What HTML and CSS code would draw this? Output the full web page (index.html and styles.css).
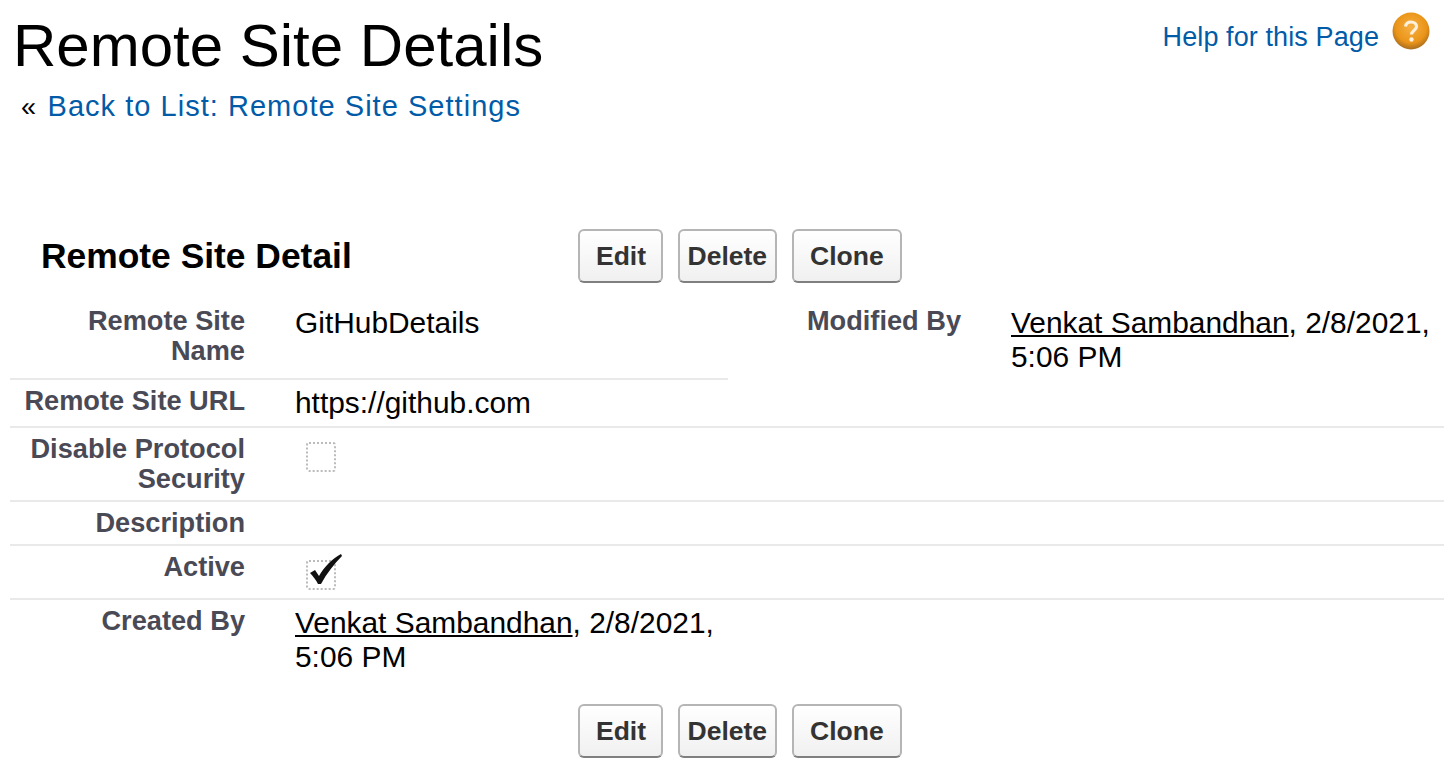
FILE: index.html
```html
<!DOCTYPE html>
<html lang="en">
<head>
  <meta charset="UTF-8">
  <meta name="viewport" content="width=device-width, initial-scale=1.0">
  <title>Remote Site Details</title>
  <link rel="stylesheet" href="styles.css">
</head>
<body>
  <div class="page-head">
    <h1 class="page-title">Remote Site Details</h1>
    <a class="help-link" href="#">
      <span>Help for this Page</span>
      <svg class="help-icon" width="38" height="38" viewBox="0 0 38 38">
        <defs>
          <radialGradient id="helpBall" cx="50%" cy="40%" r="60%">
            <stop offset="0%" stop-color="#f6b042"/>
            <stop offset="70%" stop-color="#ea9418"/>
            <stop offset="100%" stop-color="#a86c20"/>
          </radialGradient>
        </defs>
        <circle cx="19" cy="19" r="18.5" fill="url(#helpBall)"/>
        <path d="M13.5 14.5c.5-3 2.800-4.500 5.500-4.500 3.200 0 5.500 1.800 5.500 4.600 0 3.900-5 4-5 7.900" fill="none" stroke="#fdf0dc" stroke-width="3.200"/>
        <circle cx="19.500" cy="27.500" r="2.200" fill="#fdf0dc"/>
      </svg>
    </a>
  </div>
  <div class="back-row">&laquo; <a href="#">Back to List: Remote Site Settings</a></div>

  <div class="detail-head">
    <h2 class="detail-title">Remote Site Detail</h2>
    <div class="btn-row">
      <button class="btn">Edit</button>
      <button class="btn btn-tight">Delete</button>
      <button class="btn btn-wide">Clone</button>
    </div>
  </div>

  <table class="detail-table">
    <tr class="first">
      <td class="label">Remote Site Name</td>
      <td class="value">GitHubDetails</td>
      <td class="label label-wide" rowspan="2">Modified By</td>
      <td class="value" rowspan="2"><a href="#">Venkat Sambandhan</a>, 2/8/2021, 5:06 PM</td>
    </tr>
    <tr>
      <td class="label">Remote Site URL</td>
      <td class="value">https://github.com</td>
    </tr>
    <tr>
      <td class="label">Disable Protocol Security</td>
      <td class="value" colspan="3"><span class="check"></span></td>
    </tr>
    <tr>
      <td class="label">Description</td>
      <td class="value" colspan="3"></td>
    </tr>
    <tr>
      <td class="label">Active</td>
      <td class="value" colspan="3">
        <span class="check">
          <svg class="tick" width="38" height="38" viewBox="0 0 38 38">
            <path d="M4 21L9 18L13 24C18 15 26 7 35 2L36 4C28 12 21 21 15 32H12C10 28 7 24 4 21Z" fill="#111"/>
          </svg>
        </span>
      </td>
    </tr>
    <tr class="last">
      <td class="label">Created By</td>
      <td class="value"><a href="#">Venkat Sambandhan</a>, 2/8/2021, 5:06 PM</td>
      <td class="label label-wide"></td>
      <td class="value"></td>
    </tr>
  </table>

  <div class="btn-row btn-row-bottom">
    <button class="btn">Edit</button>
    <button class="btn btn-tight">Delete</button>
    <button class="btn btn-wide">Clone</button>
  </div>
</body>
</html>
```

FILE: styles.css
```css
html, body {
  margin: 0;
  background: #fff;
  color: #000;
  font-family: "Liberation Sans", Arial, sans-serif;
}
body {
  padding: 0 12px 0 10px;
  height: 778px;
  box-sizing: border-box;
  overflow: hidden;
}
a {
  color: #015ba7;
  text-decoration: none;
}
.page-head {
  display: flex;
  justify-content: space-between;
  align-items: flex-start;
  height: 88px;
}
.page-title {
  margin: 14px 0 0 3px;
  font-size: 60px;
  line-height: 64px;
  font-weight: normal;
}
.help-link {
  display: flex;
  align-items: flex-start;
  gap: 13px;
  margin-top: 12px;
  margin-right: 14px;
  font-size: 27px;
  letter-spacing: 0.1px;
}
.help-link span {
  margin-top: 10px;
}
.help-icon {
  flex: none;
}
.back-row {
  padding-left: 11px;
  font-size: 27px;
  line-height: 36px;
}
.back-row a {
  font-size: 29px;
  letter-spacing: 1.03px;
  margin-left: 4px;
}
.detail-head {
  display: flex;
  align-items: center;
  margin-top: 105px;
  height: 52px;
}
.detail-title {
  margin: 0;
  width: 568px;
  padding-left: 31px;
  box-sizing: border-box;
  font-size: 35.4px;
  font-weight: bold;
}
.btn-row {
  display: flex;
  gap: 14.5px;
}
.btn-row-bottom {
  margin: 24px 0 0 568px;
}
.btn {
  height: 54px;
  padding: 0 15px 0 16px;
  border: 2px solid #b5b5b5;
  border-bottom-color: #7f7f7f;
  border-radius: 6px;
  background: linear-gradient(#fff, #f0f0f0);
  color: #333;
  font-family: inherit;
  font-size: 26.5px;
  font-weight: bold;
}
.btn-tight {
  padding: 0 8px;
}
.btn-wide {
  padding: 0 16.5px;
}
.detail-table {
  width: 1434px;
  margin-top: 16px;
  border-collapse: collapse;
  table-layout: fixed;
}
.detail-table td {
  box-sizing: border-box;
  border-bottom: 2px solid #e9e9e9;
  vertical-align: top;
}
.detail-table .last td {
  border-bottom: none;
}
.detail-table .first td {
  padding-top: 8px;
  padding-bottom: 12px;
}
.label {
  width: 235px;
  padding: 6px 0 6px 10px;
  text-align: right;
  color: #4a4a56;
  font-size: 27.2px;
  line-height: 30px;
  font-weight: bold;
}
.value {
  width: 483px;
  padding: 6px 0 6px 50px;
  font-size: 29.9px;
  line-height: 34px;
}
.value a {
  color: #000;
  text-decoration: underline;
}
.label-wide {
  width: 233px;
}
.check {
  display: block;
  position: relative;
  width: 26px;
  height: 26px;
  margin: 8px 0 2px 11px;
  border: 2px dotted #bbb;
  border-radius: 3px;
}
.tick {
  position: absolute;
  left: -2px;
  top: -10px;
}
```
